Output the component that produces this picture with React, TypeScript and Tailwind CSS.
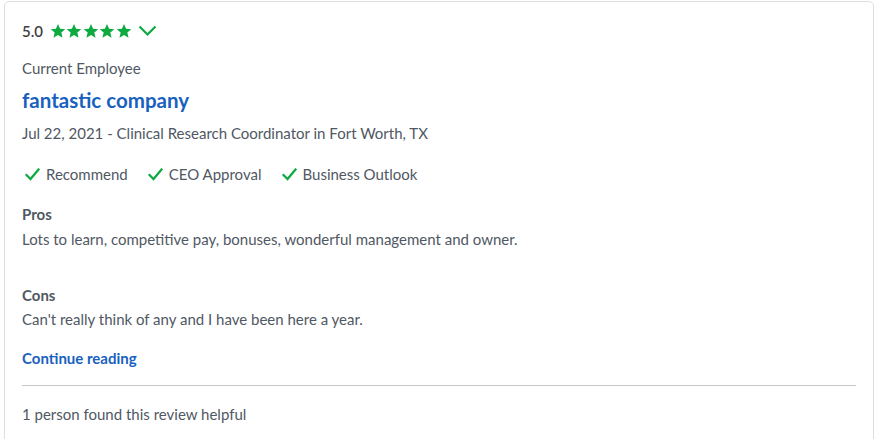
import { FC } from 'react'

const GREEN = '#0caa41'

const Star: FC = () => (
  <svg width="16" height="16" viewBox="0 0 24 24" className="shrink-0">
    <path
      fill={GREEN}
      d="M12 1.5l3.1 7.2 7.8.6-5.9 5.1 1.8 7.6L12 17.9 5.2 22l1.8-7.6L1.1 9.3l7.8-.6z"
    />
  </svg>
)

const Check: FC = () => (
  <svg width="15" height="13" viewBox="0 0 15 13" className="shrink-0">
    <path d="M1.5 7l4 4L13.5 1.5" fill="none" stroke={GREEN} strokeWidth="2.2" strokeLinecap="square" />
  </svg>
)

const Chevron: FC = () => (
  <svg width="19" height="12" viewBox="0 0 19 12" className="shrink-0">
    <path d="M1.5 1.5l8 8 8-8" fill="none" stroke={GREEN} strokeWidth="2.2" />
  </svg>
)

const Verdict: FC<{ label: string }> = ({ label }) => (
  <span className="flex items-center gap-[6px]">
    <Check />
    <span>{label}</span>
  </span>
)

export default function App() {
  return (
    <div className="min-h-screen bg-white pt-[1px] pl-[4px] pr-[7px] font-['Lato','Noto_Sans',sans-serif] text-[15px] text-[#505863]">
      <div className="rounded-[5px] border border-[#dedede] px-[17px] pt-[19px] pb-[30px]">
        <div className="flex h-5 items-center">
          <span className="mr-[7px] text-[15px] font-semibold text-[#404040]">5.0</span>
          <span className="flex gap-[0.5px]">
            <Star />
            <Star />
            <Star />
            <Star />
            <Star />
          </span>
          <span className="ml-[6px] flex items-center">
            <Chevron />
          </span>
        </div>

        <div className="mt-[17px] leading-5">Current Employee</div>

        <h2 className="mt-[9px] text-[20.5px] font-bold leading-[26px] text-[#1861bf]">fantastic company</h2>

        <div className="mt-[10px] leading-5">Jul 22, 2021 - Clinical Research Coordinator in Fort Worth, TX</div>

        <div className="mt-[21px] flex h-5 items-center gap-[20px] pl-[3px]">
          <Verdict label="Recommend" />
          <Verdict label="CEO Approval" />
          <Verdict label="Business Outlook" />
        </div>

        <div className="mt-[20px] font-bold leading-5">Pros</div>
        <p className="mt-[5px] leading-5">Lots to learn, competitive pay, bonuses, wonderful management and owner.</p>

        <div className="mt-[36px] font-bold leading-5">Cons</div>
        <p className="mt-[4px] leading-5">Can't really think of any and I have been here a year.</p>

        <a href="#" className="mt-[19px] block font-bold leading-5 text-[#1861bf]">
          Continue reading
        </a>

        <div className="mt-[17px] h-px bg-[#c8c8c8]" />

        <div className="mt-[18px] leading-5">1 person found this review helpful</div>
      </div>
    </div>
  )
}
